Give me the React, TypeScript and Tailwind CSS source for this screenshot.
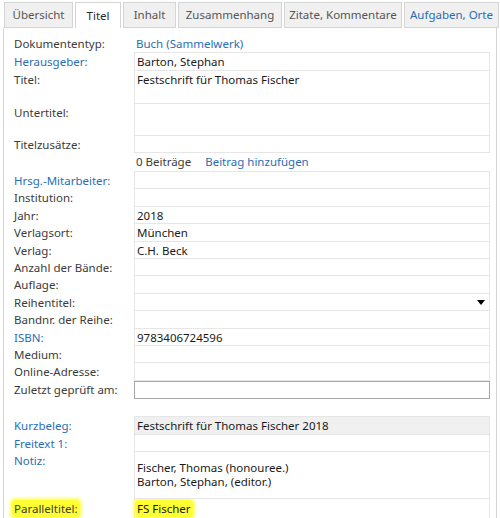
const tabs = [
  { label: 'Übersicht', w: 'w-[69px]' },
  { label: 'Titel', w: 'w-[46px]', active: true },
  { label: 'Inhalt', w: 'w-[53px]' },
  { label: 'Zusammenhang', w: 'w-[104px]' },
  { label: 'Zitate, Kommentare', w: 'w-[118px]' },
  { label: 'Aufgaben, Orte', w: 'w-[95px]', blue: true },
];

type Row = {
  label: string;
  link?: boolean;
  value?: string[];
  h?: string;
  gray?: boolean;
  select?: boolean;
  multi?: boolean;
};

const rows1: Row[] = [
  { label: 'Herausgeber:', link: true, value: ['Barton, Stephan'], h: 'h-[18px]' },
  { label: 'Titel:', value: ['Festschrift für Thomas Fischer'], h: 'h-[33px]' },
  { label: 'Untertitel:', h: 'h-[32px]' },
  { label: 'Titelzusätze:', h: 'h-[17px]' },
];

const rows2: Row[] = [
  { label: 'Hrsg.-Mitarbeiter:', link: true },
  { label: 'Institution:' },
  { label: 'Jahr:', value: ['2018'] },
  { label: 'Verlagsort:', value: ['München'] },
  { label: 'Verlag:', value: ['C.H. Beck'] },
  { label: 'Anzahl der Bände:' },
  { label: 'Auflage:' },
  { label: 'Reihentitel:', select: true },
  { label: 'Bandnr. der Reihe:' },
  { label: 'ISBN:', link: true, value: ['9783406724596'] },
  { label: 'Medium:' },
  { label: 'Online-Adresse:' },
];

const rows3: Row[] = [
  { label: 'Kurzbeleg:', link: true, value: ['Festschrift für Thomas Fischer 2018'], gray: true, h: 'h-[18px]' },
  { label: 'Freitext 1:', link: true, h: 'h-[17px]' },
  {
    label: 'Notiz:',
    link: true,
    value: ['Fischer, Thomas (honouree.)', 'Barton, Stephan, (editor.)'],
    h: 'h-[47px]',
    multi: true,
  },
];

function FieldRow({ row }: { row: Row }) {
  return (
    <div className={`flex ${row.h ?? 'h-[17.4px]'}`}>
      <div
        className={`w-[130px] shrink-0 pl-[10px] leading-[17px] ${
          row.link ? 'text-[#2a6db5]' : 'text-[#3b3b3b]'
        }`}
      >
        {row.label}
      </div>
      <div
        className={`relative flex-1 border-x border-b border-[#e6e6e6] pl-[2px] text-[#1a1a1a] ${
          row.multi ? 'pt-[9px] leading-[14px]' : 'pt-[1px] leading-[15px]'
        } ${row.gray ? 'bg-[#f0f0f0]' : 'bg-white'}`}
      >
        {row.value?.map((v, i) => (
          <div key={i}>{v}</div>
        ))}
        {row.select && (
          <svg className="absolute right-[4px] top-[6px]" width="8" height="5" viewBox="0 0 8 5">
            <path d="M0 0 H8 L4 5 Z" fill="#000" />
          </svg>
        )}
      </div>
    </div>
  );
}

export default function App() {
  return (
    <div
      className="w-[500px] h-[518px] overflow-hidden bg-white text-[11.5px]"
      style={{ fontFamily: '"Noto Sans", "Open Sans", sans-serif' }}
    >
      {/* Tabs */}
      <div className="flex h-[28px] pl-[3px] pt-[2px]">
        {tabs.map((t) =>
          t.active ? (
            <div
              key={t.label}
              className={`${t.w} mx-[1px] flex items-center justify-center border-x border-t border-[#d5d5d5] bg-white text-[#2b2b2b]`}
            >
              {t.label}
            </div>
          ) : (
            <div
              key={t.label}
              className={`${t.w} mx-[1px] flex items-center justify-center border border-[#d5d5d5] bg-[#f0f0f0] ${
                t.blue ? 'text-[#2a6db5]' : 'text-[#555]'
              }`}
            >
              {t.label}
            </div>
          )
        )}
      </div>

      {/* Panel */}
      <div className="ml-[3px] mr-[3px] h-[490px] border-l border-r border-[#d5d5d5] pr-[6px]">
        <div className="flex h-[24px] items-end">
          <div className="w-[130px] shrink-0 pl-[10px] leading-[17px] text-[#3b3b3b]">Dokumententyp:</div>
          <div className="pl-[2px] leading-[17px] text-[#2a6db5]">Buch (Sammelwerk)</div>
        </div>
        <div className="ml-[130px] h-0 border-t border-[#e6e6e6]" />
        {rows1.map((r) => (
          <FieldRow key={r.label} row={r} />
        ))}
        <div className="flex h-[18px] items-center">
          <div className="w-[130px] shrink-0" />
          <div className="pl-[2px] text-[#3b3b3b]">0 Beiträge</div>
          <div className="pl-[14px] text-[#2a6db5]">Beitrag hinzufügen</div>
        </div>
        <div className="ml-[130px] h-0 border-t border-[#e6e6e6]" />
        {rows2.map((r) => (
          <FieldRow key={r.label} row={r} />
        ))}
        <div className="flex h-[18px]">
          <div className="w-[130px] shrink-0 pl-[10px] leading-[18px] text-[#3b3b3b]">Zuletzt geprüft am:</div>
          <div className="flex-1 border border-[#a8a8a8] bg-white" />
        </div>
        <div className="h-[17px]" />
        <div className="ml-[130px] h-0 border-t border-[#e6e6e6]" />
        {rows3.map((r) => (
          <FieldRow key={r.label} row={r} />
        ))}
        <div className="flex h-[30px]">
          <div className="w-[130px] shrink-0 pl-[8px] pt-[1px]">
            <span className="rounded-[3px] bg-[#ffff33] px-[2px] py-[1px] text-[#3b3b3b] shadow-[0_0_3px_2px_#ffff66]">
              Paralleltitel:
            </span>
          </div>
          <div className="flex-1 border-x border-[#e6e6e6] pt-[1px]">
            <span className="rounded-[3px] bg-[#ffff33] px-[2px] py-[1px] text-[#1a1a1a] shadow-[0_0_3px_2px_#ffff66]">
              FS Fischer
            </span>
          </div>
        </div>
      </div>
    </div>
  );
}
